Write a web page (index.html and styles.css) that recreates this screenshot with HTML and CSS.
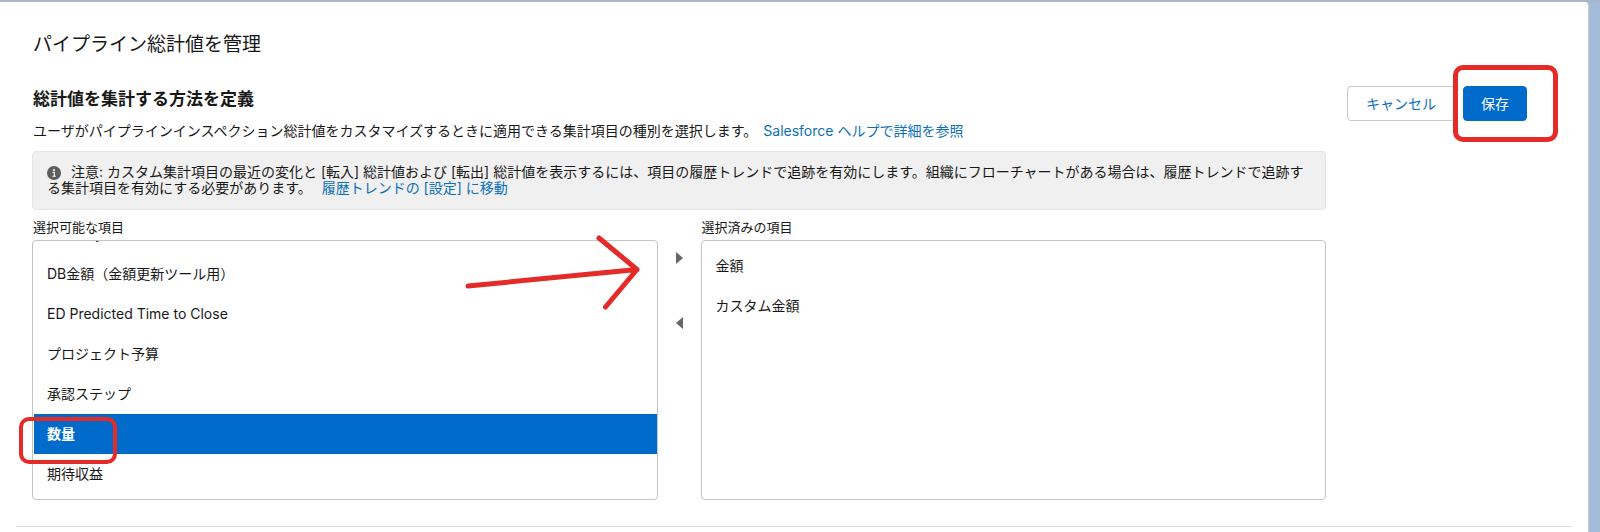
FILE: index.html
```html
<!DOCTYPE html>
<html lang="ja">
<head>
  <meta charset="UTF-8" />
  <meta name="viewport" content="width=device-width, initial-scale=1.0"/>
  <title>パイプライン総計値を管理</title>
  <link rel="stylesheet" href="styles.css">
</head>
<body>
  <main class="card">
    <h1>パイプライン総計値を管理</h1>

    <section class="settings">
      <div class="content">
        <h2>総計値を集計する方法を定義</h2>
        <p class="description">ユーザがパイプラインインスペクション総計値をカスタマイズするときに適用できる集計項目の種別を選択します。 <a href="#">Salesforce ヘルプで詳細を参照</a></p>

        <p class="note">
          <svg class="info-icon" viewBox="0 0 14 14" aria-hidden="true">
            <circle cx="7" cy="7" r="7" fill="#5c5c5c"/>
            <circle cx="7" cy="4" r="1" fill="#fff"/>
            <path d="M5.5 6.3H7.3V10M5.3 10.2H8.8" fill="none" stroke="#fff" stroke-width="1.1"/>
          </svg>注意: カスタム集計項目の最近の変化と [転入] 総計値および [転出] 総計値を表示するには、項目の履歴トレンドで追跡を有効にします。組織にフローチャートがある場合は、履歴トレンドで追跡する集計項目を有効にする必要があります。 <a class="note-link" href="#">履歴トレンドの [設定] に移動</a>
        </p>

        <div class="duel">
          <div class="column">
            <span class="label" id="available-label">選択可能な項目</span>
            <div class="list-wrap">
              <ul class="list list-scrolled" role="listbox" aria-labelledby="available-label" tabindex="0">
                <li role="option">Quantity（金額更新ツール用）</li>
                <li role="option">DB金額（金額更新ツール用）</li>
                <li role="option">ED Predicted Time to Close</li>
                <li role="option">プロジェクト予算</li>
                <li role="option">承認ステップ</li>
                <li role="option" class="selected" aria-selected="true">数量</li>
                <li role="option">期待収益</li>
              </ul>
              <span class="mark mark-option"></span>
              <svg class="mark-arrow" viewBox="0 0 176 76" aria-hidden="true">
                <path d="M3 51L172 34.500M134 3L172 34.500L140.500 72"/>
              </svg>
            </div>
          </div>

          <div class="movers">
            <button type="button" class="mover" aria-label="追加">
              <svg viewBox="0 0 7 12"><path d="M0 0L7 6L0 12Z"/></svg>
            </button>
            <button type="button" class="mover" aria-label="削除">
              <svg viewBox="0 0 7 12"><path d="M7 0L0 6L7 12Z"/></svg>
            </button>
          </div>

          <div class="column">
            <span class="label" id="selected-label">選択済みの項目</span>
            <div class="list-wrap">
              <ul class="list" role="listbox" aria-labelledby="selected-label" tabindex="0">
                <li role="option">金額</li>
                <li role="option">カスタム金額</li>
              </ul>
            </div>
          </div>
        </div>
      </div>

      <div class="actions">
        <button type="button" class="btn">キャンセル</button>
        <div class="save-wrap">
          <button type="button" class="btn btn-brand">保存</button>
          <span class="mark mark-save"></span>
        </div>
      </div>
    </section>

    <hr>
  </main>
</body>
</html>
```

FILE: styles.css
```css
* {
  box-sizing: border-box;
}

body {
  margin: 0;
  padding: 2px 11px 0 0;
  min-height: 100vh;
  display: flex;
  background: linear-gradient(#a9b6c5 2px, #a3bbd9 2px);
  color: #181818;
  font-family: Inter, "Noto Sans CJK JP", sans-serif;
  font-size: 14px;
  line-height: 20px;
}

h1,
h2,
p,
ul {
  margin: 0;
  padding: 0;
}

a {
  color: #0b6fb8;
  text-decoration: none;
}

.card {
  flex: 1;
  background: #fff;
  border-right: 1px solid #c9c9c9;
  border-radius: 0 4px 0 0;
}

h1 {
  padding: 29px 33px 0;
  font-size: 19px;
  font-weight: 400;
  line-height: 28px;
}

.settings {
  display: flex;
  align-items: flex-start;
  gap: 21px;
  padding: 27px 61px 0 32px;
}

.content {
  flex: 1;
  min-width: 0;
}

h2 {
  padding: 1px 0 0 1px;
  font-size: 17px;
  font-weight: 700;
  line-height: 24px;
}

.description {
  margin: 10px 0;
  padding-left: 1px;
}

.description a {
  margin-left: 2px;
}

/* Notice */
.note {
  padding: 12px 14px 13px;
  background: #f0f0f0;
  border: 1px solid #e5e5e5;
  border-radius: 4px;
  line-height: 16px;
}

.info-icon {
  width: 14px;
  height: 14px;
  margin-right: 10px;
  vertical-align: -3px;
}

.note-link {
  margin-left: 6px;
}

/* Dueling picklist */
.duel {
  display: flex;
  margin-top: 7px;
}

.column {
  flex: 1;
  min-width: 0;
}

.label {
  display: block;
  padding: 0 0 3px 1px;
  font-size: 13px;
}

.list-wrap {
  position: relative;
}

.list {
  height: 260px;
  padding: 5px 0 5px 1px;
  border: 1px solid #c4c4c4;
  border-radius: 4px;
  list-style: none;
  overflow: hidden;
}

.list-scrolled {
  display: flex;
  flex-direction: column;
  justify-content: flex-end;
}

.list li {
  flex-shrink: 0;
  padding: 10px 13px;
}

.list .selected {
  background: #006bca;
  color: #fff;
  font-weight: 700;
}

.movers {
  width: 43px;
  display: flex;
  flex-direction: column;
  align-items: center;
  gap: 33px;
  padding-top: 25px;
}

.mover {
  width: 32px;
  height: 32px;
  display: flex;
  align-items: center;
  justify-content: center;
  padding: 0;
  border: 0;
  background: none;
  cursor: pointer;
}

.mover svg {
  width: 7px;
  height: 12px;
  fill: #666;
}

/* Buttons */
.actions {
  display: flex;
  gap: 8px;
}

.btn {
  height: 35px;
  padding: 0 18px;
  border: 1px solid #c9c9c9;
  border-radius: 4px;
  background: #fff;
  color: #0b6fb8;
  font: inherit;
  cursor: pointer;
}

.btn-brand {
  padding: 0 17px;
  border-color: #006bca;
  background: #006bca;
  color: #fff;
}

.save-wrap {
  position: relative;
}

/* Red annotations */
.mark {
  position: absolute;
  border: 5px solid #e42b28;
  border-radius: 10px;
  pointer-events: none;
}

.mark-save {
  inset: -21px -31px -21px -10px;
}

.mark-option {
  left: -13px;
  bottom: 36px;
  width: 98px;
  height: 47px;
  border-width: 4px;
}

.mark-arrow {
  position: absolute;
  top: -5px;
  right: 17px;
  width: 176px;
  height: 76px;
  fill: none;
  stroke: #e42b28;
  stroke-width: 5;
  stroke-linecap: round;
  stroke-linejoin: round;
  pointer-events: none;
}

hr {
  margin: 26px 16px 0;
  border: 0;
  border-top: 1px solid #ddd;
}
```
